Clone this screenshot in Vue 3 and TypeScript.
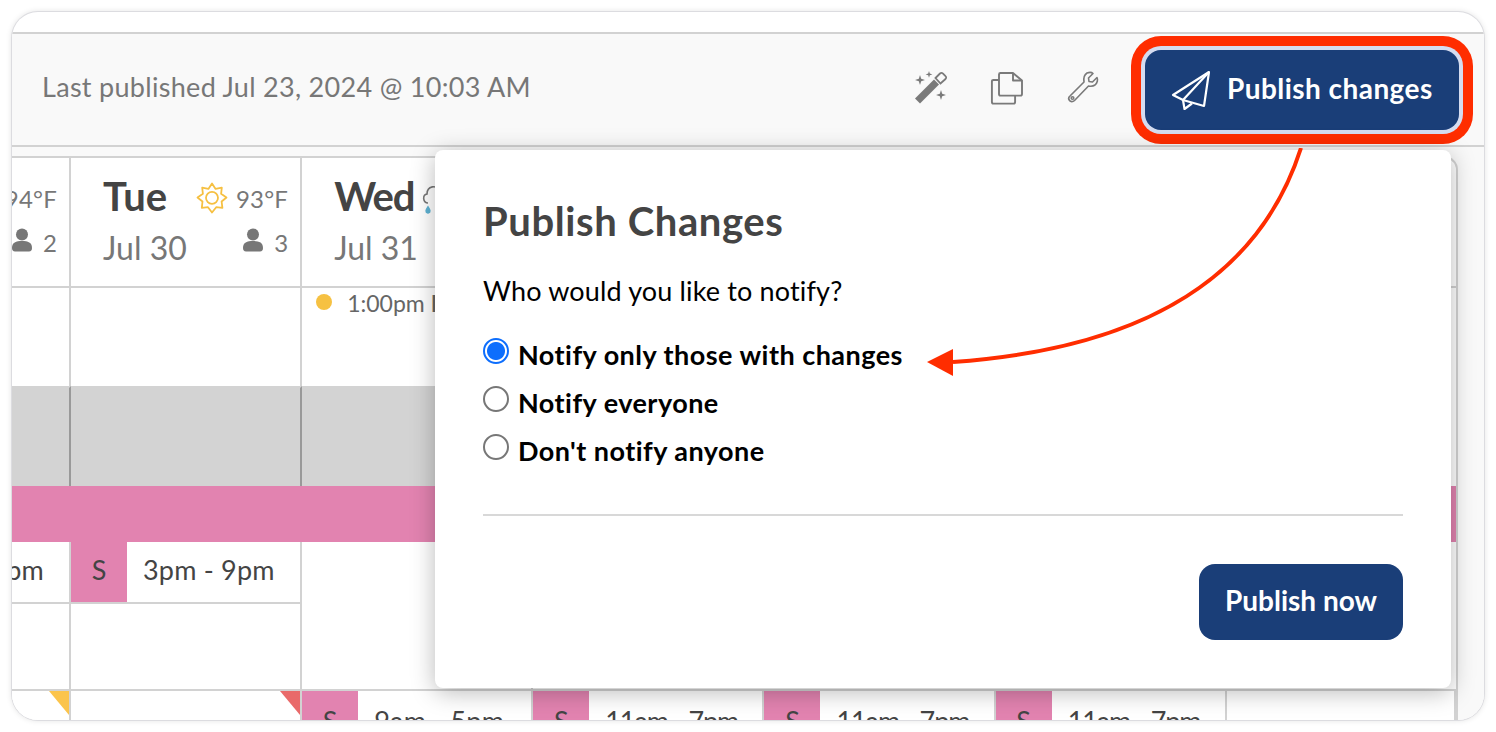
<script setup lang="ts">
interface Col { name: string; date: string; temp: string; staff: string; }
const tue: Col = { name: 'Tue', date: 'Jul 30', temp: '93°F', staff: '3' };
const options = ['Notify only those with changes', 'Notify everyone', "Don't notify anyone"];
const bottomCells = ['9am - 5pm', '11am - 7pm', '11am - 7pm', '11am - 7pm'];
const selected = 0;
</script>

<template>
  <div class="window">
    <div class="top-strip"></div>
    <header class="toolbar">
      <span class="last">Last published Jul 23, 2024 @ 10:03 AM</span>
      <div class="tools">
        <svg class="tool" width="36" height="36" viewBox="0 0 36 36">
          <path d="M2 29.5 L21 10.5 L26 15.5 L7 34.5 Z" fill="#7a7a7a" />
          <path d="M22.5 9 L27 4.5 C28 3.6 29 3.6 29.8 4.5 L32.5 7.2 C33.4 8 33.4 9 32.5 10 L27.5 14.5 Z" fill="none" stroke="#7a7a7a" stroke-width="1.8" />
          <path d="M7 6 L8.2 9.8 L12 11 L8.2 12.2 L7 16 L5.8 12.2 L2 11 L5.8 9.8 Z M16 2 L16.8 4.6 L19.4 5.4 L16.8 6.2 L16 8.8 L15.2 6.2 L12.6 5.4 L15.2 4.6 Z M28 21 L29.2 24.8 L33 26 L29.2 27.2 L28 31 L26.8 27.2 L23 26 L26.8 24.8 Z" fill="#7a7a7a" />
        </svg>
        <svg class="tool" width="36" height="36" viewBox="0 0 36 36" fill="none" stroke="#7a7a7a" stroke-width="1.9" stroke-linejoin="round">
          <path d="M10 5.5 C10 4.6 10.6 4 11.5 4 H24 L33 11.5 V25 C33 26 32.3 26.6 31.4 26.6 H11.5 C10.6 26.6 10 26 10 25 Z" />
          <path d="M24 4 V11.5 H33" />
          <path d="M10 11 H4.5 C3.5 11 2.9 11.6 2.9 12.5 V33 C2.9 34 3.5 34.6 4.5 34.6 H24.5 C25.5 34.6 26.1 34 26.1 33 V26.6" />
        </svg>
        <svg class="tool" width="36" height="36" viewBox="0 0 36 36" fill="none" stroke="#7a7a7a" stroke-width="1.6" stroke-linejoin="round">
          <path d="M22 4 C25 3 27 3.5 28 4.5 L23.5 9 L24 12.5 L27.5 13 L32 8.5 C33 10.5 32.5 14 30 16 C28 17.5 25.5 17.5 23.5 17 L9.5 31.5 C8 33 5.5 33 4.5 31.5 C3.3 30 3.5 28.2 5 27 L19 13 C18.5 10 19 6 22 4 Z" />
          <circle cx="7.5" cy="29" r="1.3" />
        </svg>
      </div>
      <button class="publish" type="button">
        <svg width="44" height="44" viewBox="0 0 44 44" fill="none" stroke="#fff" stroke-width="2.2" stroke-linejoin="round">
          <path d="M40 4 L4 27 L14 32 L35 38 Z" />
          <path d="M40 4 L14 32 L15.5 41 L23 35.5" />
        </svg>
        <span class="publish-label">Publish changes</span>
      </button>
    </header>

    <div class="body">
      <div class="grid">
        <div class="cell head first">
          <div class="line-right">
            <span class="temp">94°F</span>
          </div>
          <div class="line-right staff">
            <svg class="person" width="20" height="24" viewBox="0 0 20 24"><circle cx="10" cy="6.5" r="6" fill="#777" /><path d="M0 20 C0 14.5 4 13 10 13 C16 13 20 14.5 20 20 C20 22 19 23.5 17 23.5 H3 C1 23.5 0 22 0 20 Z" fill="#777" /></svg>
            <span class="count">2</span>
          </div>
        </div>
        <div class="cell head">
          <div class="day-col">
            <div class="day">{{ tue.name }}</div>
            <div class="date">{{ tue.date }}</div>
          </div>
          <div class="meta">
            <div class="line-right">
              <svg width="32" height="32" viewBox="0 0 32 32" fill="none" stroke="#f6c042" stroke-width="1.8" stroke-linejoin="round">
                <path d="M16 1.5 L19.6 6.9 L25.8 5.6 L25.1 11.8 L30.5 15.5 L25.6 19.5 L26.4 25.8 L20.2 25.2 L16 30.5 L12 25.2 L5.8 25.8 L6.5 19.5 L1.5 15.5 L6.9 11.8 L6.2 5.6 L12.4 6.9 Z" />
                <circle cx="16" cy="15.8" r="6" />
              </svg>
              <span class="temp">{{ tue.temp }}</span>
            </div>
            <div class="line-right staff">
              <svg class="person" width="20" height="24" viewBox="0 0 20 24"><circle cx="10" cy="6.5" r="6" fill="#777" /><path d="M0 20 C0 14.5 4 13 10 13 C16 13 20 14.5 20 20 C20 22 19 23.5 17 23.5 H3 C1 23.5 0 22 0 20 Z" fill="#777" /></svg>
              <span class="count">{{ tue.staff }}</span>
            </div>
          </div>
        </div>
        <div class="cell head wed">
          <div class="day-col">
            <div class="day tight">Wed</div>
            <div class="date">Jul 31</div>
          </div>
          <svg class="cloud" width="26" height="36" viewBox="0 0 26 36" fill="none" stroke="#777" stroke-width="1.6">
            <path d="M7 22 C2 22 1 14 6 13 C6 5 16 3 18 10 C23 10 26 15 24 22" />
            <path d="M7 26 C5 29 4 31 7 32 C10 31 9 29 7 26 Z" fill="#5fb3d4" stroke="#5fb3d4" />
          </svg>
        </div>
        <div class="cell head span-rest"></div>

        <div class="cell row-a"></div>
        <div class="cell row-a"></div>
        <div class="cell row-a event">
          <span class="dot"></span>
          <span>1:00pm <b>K</b></span>
        </div>
        <div class="cell row-a span-rest"></div>

        <div class="band gray g1"></div>
        <div class="band gray g2"></div>
        <div class="band gray g3"></div>
        <div class="band g4"></div>

        <div class="band pink"></div>

        <div class="cell row-c">
          <div class="shift-end"><span>9am - 5pm</span></div>
        </div>
        <div class="cell row-c">
          <div class="shift">
            <span class="tag">S</span>
            <span class="time">3pm - 9pm</span>
          </div>
        </div>
        <div class="cell row-c"></div>
        <div class="cell row-c span-rest"></div>

        <div class="cell row-d corner-y"></div>
        <div class="cell row-d corner-r"></div>
        <div v-for="(t, i) in bottomCells" :key="i" class="cell row-d">
          <div class="shift low">
            <span class="tag">S</span>
            <span class="time" :class="{ narrow: t.startsWith('11') }">{{ t }}</span>
          </div>
        </div>
        <div class="cell row-d"></div>
      </div>

      <section class="popover">
        <h2>Publish Changes</h2>
        <p class="q">Who would you like to notify?</p>
        <label v-for="(o, i) in options" :key="o" class="opt">
          <span class="radio" :class="{ on: i === selected }"></span>
          <span>{{ o }}</span>
        </label>
        <hr />
        <div class="foot">
          <button class="now" type="button"><span class="now-label">Publish now</span></button>
        </div>
      </section>
    </div>

    <svg class="arrow" width="420" height="240" viewBox="0 0 420 240" fill="none">
      <path d="M375 0 C335 125 225 200 27 214" stroke="#ff2d00" stroke-width="4" />
      <path d="M1 214 L27 201 L27 228 Z" fill="#ff2d00" />
    </svg>
  </div>
</template>

<style>
html, body { margin: 0; background: #fff; }
</style>

<style scoped>
.window {
  position: absolute;
  left: 12px;
  top: 12px;
  width: 1472px;
  height: 708px;
  box-sizing: border-box;
  border-radius: 26px;
  overflow: hidden;
  background: #fff;
  box-shadow: 0 0 0 1px #dcdce0, 0 0 6px rgba(0, 0, 0, .14);
  font-family: Lato, "Open Sans", sans-serif;
  color: #444;
  display: flex;
  flex-direction: column;
}
.top-strip { height: 20px; flex: none; border-bottom: 2px solid #d2d2d2; }
.toolbar {
  height: 113px;
  flex: none;
  box-sizing: border-box;
  display: flex;
  align-items: center;
  background: #f9f9f9;
  border-bottom: 2px solid #d2d2d2;
  padding-left: 30px;
}
.last { font-size: 27px; letter-spacing: .3px; color: #777; flex: 1; position: relative; top: -3px; }
.tools { display: flex; gap: 40px; align-items: center; margin-right: 44px; position: relative; top: -3px; }
.publish {
  width: 314px;
  height: 80px;
  margin-right: 25px;
  box-sizing: border-box;
  border: 0;
  border-radius: 16px;
  background: #1a3e78;
  color: #fff;
  display: flex;
  align-items: center;
  gap: 14px;
  padding: 0 0 0 24px;
  font: 700 28px Lato, sans-serif;
  letter-spacing: .45px;
  box-shadow: 0 0 0 4px #d5dcf0, 0 0 0 14px #ff2d00;
  white-space: nowrap;
}
.publish-label, .now-label { position: relative; top: -2px; }
.body { position: relative; flex: 1; display: flex; padding-top: 9px; background: #f9f9f9; min-height: 0; }
.grid {
  width: 1446px;
  flex: none;
  display: grid;
  grid-template-columns: 59px repeat(5, 231.17px) 1fr;
  grid-template-rows: 130px 98px 100px 56px 149px 30px;
  position: relative;
  background: #fff;
  border-top: 2px solid #d2d2d2;
  border-right: 2px solid #d2d2d2;
  border-top-right-radius: 14px;
  box-sizing: border-box;
  overflow: hidden;
}
.cell {
  box-sizing: border-box;
  border-right: 2px solid #d2d2d2;
  border-bottom: 2px solid #d2d2d2;
  min-width: 0;
  overflow: hidden;
}
.span-rest { grid-column: span 4; border-right: 0; }
.head { display: flex; padding: 16px 12px 0 32px; }
.head.first { display: block; padding: 19px 12px 0 0; }
.day-col { flex: 1; }
.day { font-size: 40px; font-weight: 700; line-height: 44px; color: #444; }
.day.tight { letter-spacing: -1.2px; }
.date { font-size: 32px; line-height: 36px; margin-top: 12px; color: #777; }
.meta { display: flex; flex-direction: column; margin-top: 3px; }
.line-right { display: flex; justify-content: flex-end; align-items: center; gap: 8px; height: 42px; white-space: nowrap; }
.staff { height: 44px; gap: 11px; }
.temp { font-size: 24px; letter-spacing: .2px; color: #777; }
.count { font-size: 24px; color: #777; position: relative; top: 1px; }
.person { position: relative; top: -1px; }
.first .line-right { overflow: hidden; }
.wed { padding-right: 0; gap: 3px; }
.wed .day-col { flex: none; }
.cloud { margin-top: 7px; flex: none; }
.row-a { border-bottom: 0; }
.event { display: flex; align-items: flex-start; gap: 15px; padding: 0 0 0 14px; font-size: 23px; line-height: 30px; color: #666; white-space: nowrap; }
.dot { width: 16px; height: 16px; border-radius: 50%; background: #f6c142; margin-top: 6px; flex: none; }
.band { box-sizing: border-box; }
.gray { background: #d3d3d3; grid-row: 3; border-top: 2px solid #d3d3d3; border-right: 2px solid #999; }
.g1 { grid-column: 1; }
.g2 { grid-column: 2; }
.g3 { grid-column: 3 / 7; border-right: 0; }
.g4 { grid-row: 3; grid-column: 7; background: #fff; }
.pink { background: #e283b0; grid-row: 4; grid-column: 1 / -1; }
.shift { display: flex; height: 62px; border-bottom: 2px solid #d2d2d2; box-sizing: border-box; }
.shift-end { display: flex; justify-content: flex-end; height: 62px; box-sizing: border-box; line-height: 56px; font-size: 27px; letter-spacing: .2px; color: #444; padding-right: 25px; border-bottom: 2px solid #d2d2d2; white-space: nowrap; }
.tag { width: 56px; flex: none; background: #e283b0; color: #444; text-align: center; font-size: 27px; line-height: 56px; }
.time { padding-left: 16px; font-size: 27px; letter-spacing: .2px; line-height: 56px; color: #444; white-space: nowrap; }
.time.narrow { letter-spacing: -1.1px; }
.low { height: 30px; border-bottom: 0; }
.low .time { line-height: 60px; }
.low .tag { line-height: 60px; }
.row-d { border-bottom: 0; position: relative; }
.corner-y::after, .corner-r::after { content: ""; position: absolute; top: 0; right: 0; border-style: solid; border-width: 0 20px 24px 0; }
.corner-y::after { border-color: transparent #fbc44c transparent transparent; }
.corner-r::after { border-color: transparent #e96a6a transparent transparent; }

.popover {
  position: absolute;
  left: 423px;
  top: 3px;
  width: 1016px;
  height: 538px;
  box-sizing: border-box;
  background: #fff;
  border-radius: 8px;
  box-shadow: 0 4px 24px rgba(0, 0, 0, .28);
  padding: 48px 48px 0;
  color: #000;
}
h2 { margin: 0; font-size: 40px; letter-spacing: .6px; line-height: 46px; font-weight: 700; color: #444; }
.q { margin: 31px 0 23px; font-size: 27px; letter-spacing: .15px; line-height: 32px; color: #000; }
.opt { display: flex; align-items: center; gap: 9px; height: 48px; font-size: 27px; letter-spacing: .47px; font-weight: 700; color: #000; }
.radio { width: 26px; height: 26px; box-sizing: border-box; border: 2px solid #777; border-radius: 50%; background: #fff; position: relative; top: -3px; flex: none; }
.radio.on { border-color: #0d6efd; background: radial-gradient(circle, #0d6efd 0 8.5px, #fff 9.5px); }
hr { margin: 40px 0 0; border: 0; border-top: 2px solid #d8d8d8; }
.foot { display: flex; justify-content: flex-end; margin-top: 48px; }
.now {
  width: 204px;
  height: 76px;
  border: 0;
  border-radius: 16px;
  background: #1a3e78;
  color: #fff;
  font: 700 28px Lato, sans-serif;
}
.arrow { position: absolute; left: 914px; top: 136px; pointer-events: none; }
</style>
